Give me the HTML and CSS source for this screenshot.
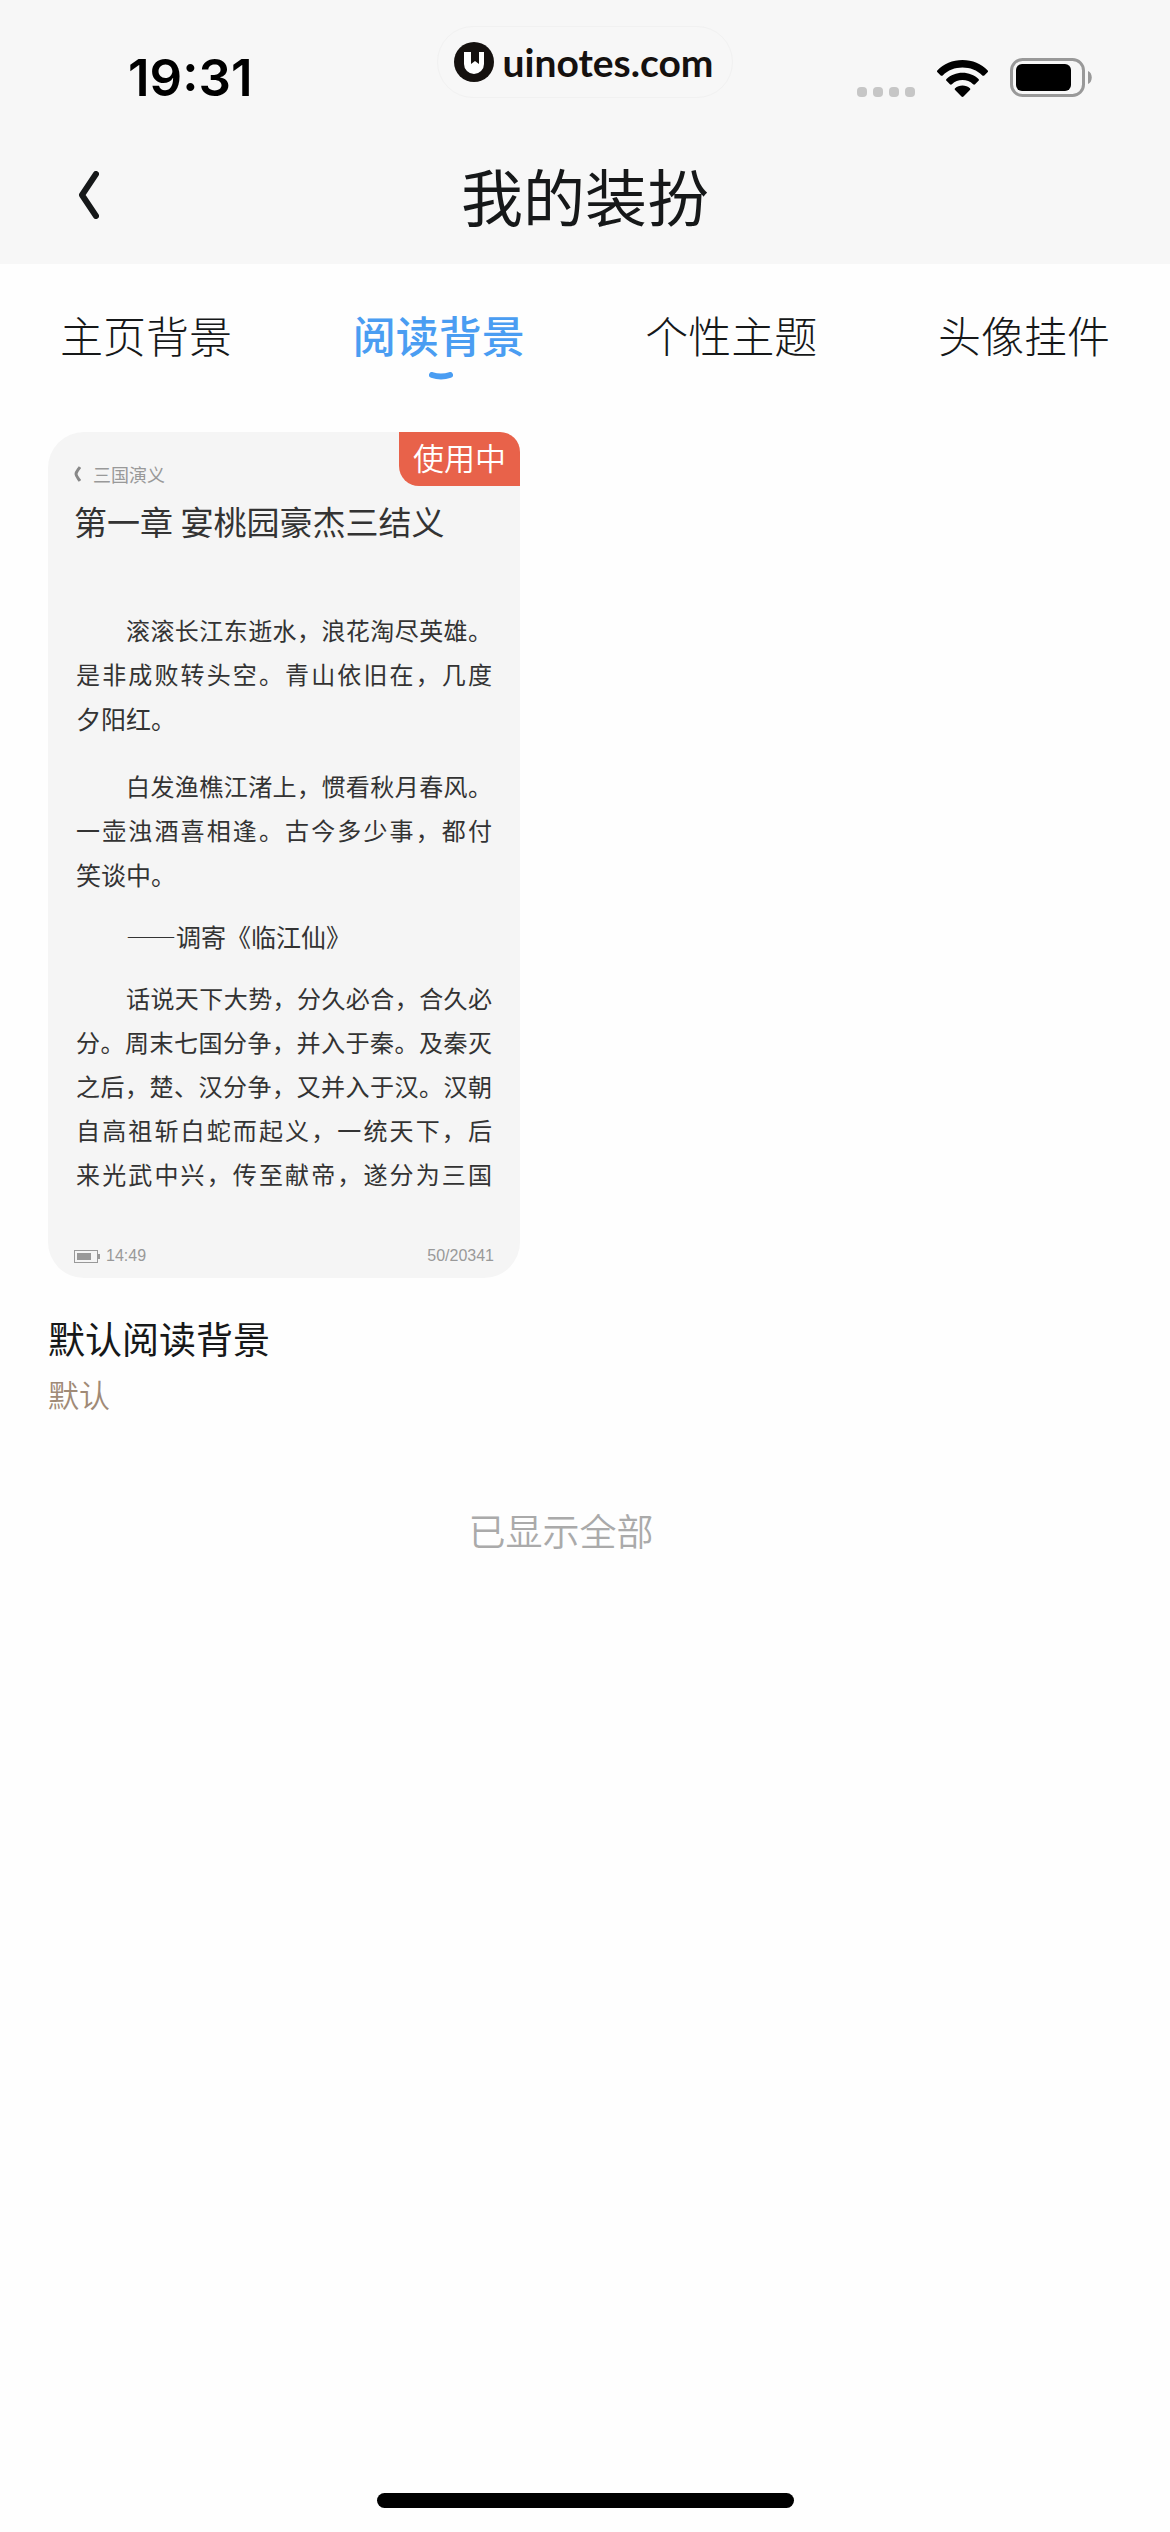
FILE: index.html
```
<!DOCTYPE html>
<html lang="zh-CN">
<head>
    <meta charset="utf-8">
    <meta name="viewport" content="width=device-width, initial-scale=1">
    <title>我的装扮</title>
    <link rel="stylesheet" href="styles.css">
</head>
<body>
    <header class="header">
        <div class="status-bar">
            <div class="time">19:31</div>
            <div class="site-pill">
                <svg class="site-logo" viewBox="0 0 40 40">
                    <circle cx="20" cy="20" r="20" fill="#15110f"/>
                    <path d="M10 10h7v12l4-3 4 3V10h5v12a10 10 0 0 1-20 0z" fill="#fff"/>
                    <path d="M17 9h8v12l-4-3-4 3z" fill="#15110f"/>
                </svg>
                <span>uinotes.com</span>
            </div>
            <div class="status-icons">
                <div class="dots"><i></i><i></i><i></i><i></i></div>
                <svg class="wifi" viewBox="0 0 51 37">
                    <path d="M25.500 0C35.500 0 44.500 3.800 50.500 10.200c.7.700.7 1.400 0 2.100l-3.200 3.100c-.6.600-1.400.6-2 0C40 10.300 33 7.600 25.500 7.600S11 10.300 5.700 15.400c-.6.600-1.400.6-2 0L.5 12.300c-.7-.7-.7-1.400 0-2.100C6.500 3.800 15.500 0 25.500 0z"/>
                    <path d="M25.500 12.700c6.200 0 11.800 2.300 16 6.200.6.600.6 1.300 0 1.900l-3.400 3.400c-.6.600-1.300.6-2 0a15.600 15.600 0 0 0-21.200 0c-.7.600-1.400.6-2 0l-3.400-3.400c-.6-.6-.6-1.300 0-1.900 4.200-3.900 9.800-6.200 16-6.200z"/>
                    <path d="M25.500 25.400c2.800 0 5.400 1 7.400 2.800.6.500.6 1.300 0 1.900l-6.400 6.400c-.6.600-1.400.6-2 0l-6.400-6.400c-.6-.6-.6-1.400 0-1.900 2-1.800 4.600-2.800 7.400-2.800z"/>
                </svg>
                <svg class="battery" viewBox="0 0 82 39">
                    <rect x="1.500" y="1.500" width="72" height="36" rx="11" fill="none" stroke="#999" stroke-width="3"/>
                    <rect x="6" y="6" width="55" height="27" rx="6"/>
                    <path d="M78 13c5 2 5 11 0 13z" fill="#999"/>
                </svg>
            </div>
        </div>
        <div class="nav-bar">
            <button class="back" type="button" aria-label="返回">
                <svg viewBox="0 0 21 48">
                    <path d="M18 3L4 24l14 21" fill="none" stroke="#161819" stroke-width="6" stroke-linecap="round" stroke-linejoin="round"/>
                </svg>
            </button>
            <h1>我的装扮</h1>
        </div>
    </header>

    <nav class="tabs">
        <a href="#home">主页背景</a>
        <a href="#read" class="active">阅读背景
            <svg class="tab-mark" viewBox="0 0 24 8">
                <path d="M3 3q9 3 18 0" fill="none" stroke="#4a9df2" stroke-width="6" stroke-linecap="round"/>
            </svg>
        </a>
        <a href="#theme">个性主题</a>
        <a href="#avatar">头像挂件</a>
    </nav>

    <main class="list">
        <article class="item">
            <div class="preview">
                <span class="badge">使用中</span>
                <div class="book">
                    <svg viewBox="0 0 7 16">
                        <path d="M6 1C4 4 2 6 2 8s2 4 4 7" fill="none" stroke="#888" stroke-width="3"/>
                    </svg>
                    三国演义
                </div>
                <h2>第一章 宴桃园豪杰三结义</h2>
                <div class="text">
                    <p>
                        <span class="full indent">滚滚长江东逝水，浪花淘尽英雄。</span>
                        <span class="full">是非成败转头空。青山依旧在，几度</span>
                        <span>夕阳红。</span>
                    </p>
                    <p>
                        <span class="full indent">白发渔樵江渚上，惯看秋月春风。</span>
                        <span class="full">一壶浊酒喜相逢。古今多少事，都付</span>
                        <span>笑谈中。</span>
                    </p>
                    <p class="source-line">
                        <span class="indent">——调寄《临江仙》</span>
                    </p>
                    <p>
                        <span class="full indent">话说天下大势，分久必合，合久必</span>
                        <span class="full">分。周末七国分争，并入于秦。及秦灭</span>
                        <span class="full">之后，楚、汉分争，又并入于汉。汉朝</span>
                        <span class="full">自高祖斩白蛇而起义，一统天下，后</span>
                        <span class="full">来光武中兴，传至献帝，遂分为三国</span>
                    </p>
                </div>
                <div class="page-info">
                    <svg viewBox="0 0 26 13">
                        <rect x=".5" y=".5" width="23" height="12" fill="none" stroke="#999"/>
                        <rect x="3" y="3" width="14" height="7" fill="#999"/>
                        <path d="M24 4h2v5h-2z" fill="#999"/>
                    </svg>
                    <span>14:49</span>
                    <span class="page-no">50/20341</span>
                </div>
            </div>
            <h3>默认阅读背景</h3>
            <div class="source">默认</div>
        </article>
        <div class="end">已显示全部</div>
    </main>

    <div class="home-indicator"></div>
</body>
</html>
```
FILE: styles.css
```
* {
    box-sizing: border-box;
}

body {
    margin: 0;
    min-height: 100vh;
    display: flex;
    flex-direction: column;
    background-color: #fefefe;
    color: #161819;
    font-family: "Noto Sans CJK SC", sans-serif;
}

h1, h2, h3, p {
    margin: 0;
    font-weight: 400;
}

svg {
    display: block;
}

.header {
    padding-bottom: 4px;
    background-color: #f7f7f7;
}

/* status bar */

.status-bar {
    display: grid;
    grid-template-columns: 1fr auto 1fr;
    height: 130px;
    padding: 26px 78px 0;
}

.time {
    height: 104px;
    padding-left: 50px;
    color: #000;
    font: 600 51px/104px Inter, sans-serif;
}

.site-pill {
    display: flex;
    align-items: center;
    gap: 8px;
    height: 72px;
    padding: 0 18px 0 16px;
    border-radius: 36px;
    border: 1px solid #f1f1f1;
    color: #15110f;
    font: 700 39px/48px Lato, sans-serif;
}

.site-logo {
    width: 40px;
    height: 40px;
}

.status-icons {
    display: flex;
    justify-content: flex-end;
    align-items: flex-end;
    gap: 22px;
    height: 71px;
}

.dots {
    display: flex;
    gap: 6px;
}

.dots i {
    width: 10px;
    height: 10px;
    border-radius: 4px;
    background-color: #c6c6c6;
}

.wifi {
    width: 51px;
    height: 37px;
}

.battery {
    width: 82px;
    height: 39px;
}

/* title */

.nav-bar {
    display: grid;
    grid-template-columns: 1fr auto 1fr;
    align-items: center;
    height: 130px;
    padding: 0 48px;
}

.back {
    width: 80px;
    height: 80px;
    padding: 0 30px;
    border: 0;
    background: none;
}

.back svg {
    width: 21px;
    height: 48px;
}

h1 {
    font-size: 62px;
    line-height: 124px;
}

/* tabs */

.tabs {
    display: flex;
    justify-content: space-between;
    padding: 34px 60px 52px;
}

.tabs a {
    position: relative;
    color: #161819;
    font-size: 43px;
    font-weight: 300;
    line-height: 72px;
    height: 82px;
    text-decoration: none;
}

.tabs .active {
    color: #4a9df2;
    font-weight: 500;
}

.tab-mark {
    position: absolute;
    left: 50%;
    bottom: 0;
    width: 24px;
    height: 8px;
    margin-left: -10px;
}

/* backgrounds */

.list {
    margin-right: 48px;
}

.item {
    width: 472px;
    margin-left: 48px;
}

.preview {
    position: relative;
    padding: 22px 26px 14px;
    border-radius: 36px;
    background-color: #f5f5f5;
    color: #333;
}

.badge {
    position: absolute;
    top: 0;
    right: 0;
    padding: 0 14px 4px;
    border-radius: 0 20px 0 20px;
    background-color: #e8624a;
    color: #fff;
    font-size: 31px;
    font-weight: 350;
    line-height: 50px;
}

.book {
    display: flex;
    align-items: center;
    gap: 12px;
    color: #999;
    font-size: 18px;
    line-height: 40px;
}

.book svg {
    width: 7px;
    height: 16px;
}

h2 {
    font-size: 33px;
    line-height: 54px;
}

.text {
    width: 418px;
    padding: 60px 0 52px 2px;
    font-size: 25px;
    line-height: 44px;
}

.text p + p {
    margin-top: 24px;
}

.text .source-line,
.text .source-line + p {
    margin-top: 18px;
}

.text span {
    display: block;
    white-space: nowrap;
}

.text .indent {
    padding-left: 50px;
}

.text .full {
    font-size: 24px;
    text-align: justify;
    text-align-last: justify;
}

.page-info {
    display: flex;
    align-items: center;
    gap: 6px;
    color: #999;
    font: 16px/16px "Liberation Sans", sans-serif;
}

.page-info svg {
    width: 26px;
    height: 13px;
}

.page-no {
    margin-left: auto;
}

h3 {
    margin-top: 32px;
    font-size: 37px;
    line-height: 56px;
}

.source {
    color: #a08a76;
    font-size: 31px;
    font-weight: 350;
    line-height: 56px;
}

.end {
    padding: 80px 0;
    color: #aaa;
    font-size: 37px;
    font-weight: 350;
    line-height: 56px;
    text-align: center;
}

.home-indicator {
    width: 417px;
    height: 15px;
    margin: auto auto 24px;
    border-radius: 8px;
    background-color: #000;
}
```
